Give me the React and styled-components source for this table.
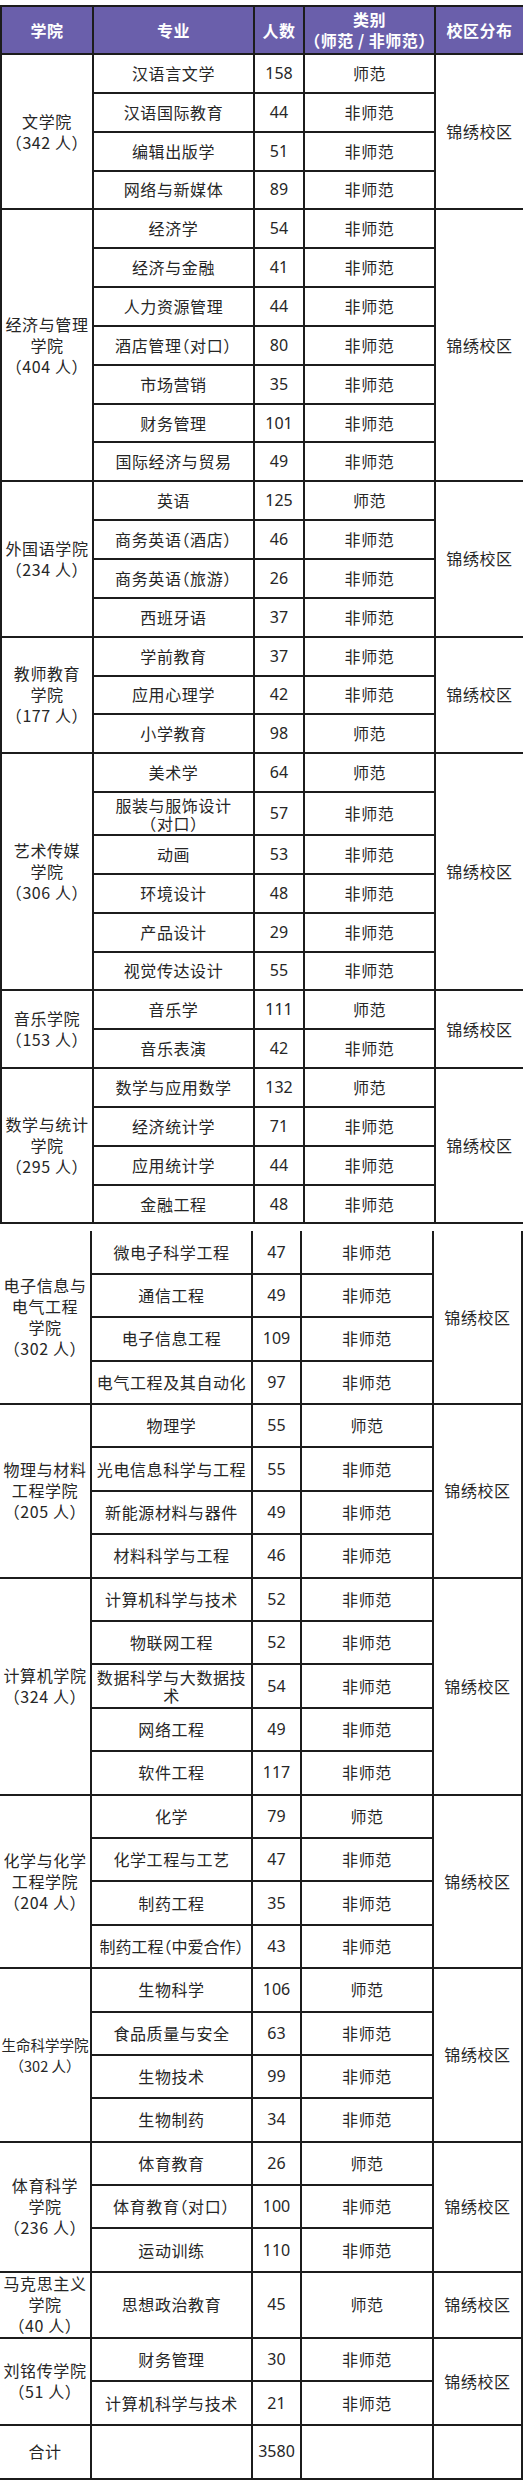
import React from "react";
import styled, { createGlobalStyle } from "styled-components";

const Global = createGlobalStyle`
  html, body { margin: 0; padding: 0; background: #fff; }
  body {
    font-family: "Noto Sans CJK SC", "Noto Sans", sans-serif;
    color: #262626;
    overflow-x: hidden;
  }
`;

const Page = styled.div`
  width: 523px;
  display: flex;
  flex-direction: column;
  padding-top: 5px;
  gap: 7px;
`;

const Grid = styled.div`
  display: grid;
  background: #1c1c1c;
  gap: 2px;
  grid-template-columns: ${(p) => p.$cols};
  grid-template-rows: ${(p) => p.$rows};
  padding: ${(p) => p.$pad};
`;

const Cell = styled.div`
  grid-column: ${(p) => p.$col};
  grid-row: span ${(p) => p.$span || 1};
  background: #fff;
  display: flex;
  align-items: center;
  justify-content: center;
  text-align: center;
  font-size: 16px;
  line-height: ${(p) => p.$lh || "21px"};
  letter-spacing: ${(p) => (p.$tight ? "0" : "0.6px")};
  font-feature-settings: "halt";
  white-space: pre-line;
  padding: 0 1px;
`;

const CollegeCell = styled(Cell)`
  font-size: ${(p) => p.$size || "16px"};
  letter-spacing: ${(p) => (p.$size ? "0" : "0.6px")};
`;

const HeadCell = styled(Cell)`
  background: #6a5fab;
  color: #fff;
  font-weight: 700;
  font-size: 16px;
  letter-spacing: 0.5px;
`;

const NumCell = styled(Cell)`
  font-family: "Noto Sans", "Noto Sans CJK SC", sans-serif;
  letter-spacing: 0;
`;

const A = "师范";
const B = "非师范";

const topData = [
  {
    college: "文学院\n（342 人）",
    majors: [
      ["汉语言文学", 158, A],
      ["汉语国际教育", 44, B],
      ["编辑出版学", 51, B],
      ["网络与新媒体", 89, B],
    ],
  },
  {
    college: "经济与管理\n学院\n（404 人）",
    majors: [
      ["经济学", 54, B],
      ["经济与金融", 41, B],
      ["人力资源管理", 44, B],
      ["酒店管理（对口）", 80, B],
      ["市场营销", 35, B],
      ["财务管理", 101, B],
      ["国际经济与贸易", 49, B],
    ],
  },
  {
    college: "外国语学院\n（234 人）",
    majors: [
      ["英语", 125, A],
      ["商务英语（酒店）", 46, B],
      ["商务英语（旅游）", 26, B],
      ["西班牙语", 37, B],
    ],
  },
  {
    college: "教师教育\n学院\n（177 人）",
    majors: [
      ["学前教育", 37, B],
      ["应用心理学", 42, B],
      ["小学教育", 98, A],
    ],
  },
  {
    college: "艺术传媒\n学院\n（306 人）",
    majors: [
      ["美术学", 64, A],
      ["服装与服饰设计\n（对口）", 57, B, "41px"],
      ["动画", 53, B],
      ["环境设计", 48, B],
      ["产品设计", 29, B],
      ["视觉传达设计", 55, B],
    ],
  },
  {
    college: "音乐学院\n（153 人）",
    majors: [
      ["音乐学", 111, A],
      ["音乐表演", 42, B],
    ],
  },
  {
    college: "数学与统计\n学院\n（295 人）",
    majors: [
      ["数学与应用数学", 132, A],
      ["经济统计学", 71, B],
      ["应用统计学", 44, B],
      ["金融工程", 48, B],
    ],
  },
];

const R2 = "41.4px";
const bottomData = [
  {
    college: "电子信息与\n电气工程\n学院\n（302 人）",
    majors: [
      ["微电子科学工程", 47, B],
      ["通信工程", 49, B],
      ["电子信息工程", 109, B],
      ["电气工程及其自动化", 97, B],
    ],
  },
  {
    college: "物理与材料\n工程学院\n（205 人）",
    majors: [
      ["物理学", 55, A],
      ["光电信息科学与工程", 55, B],
      ["新能源材料与器件", 49, B],
      ["材料科学与工程", 46, B],
    ],
  },
  {
    college: "计算机学院\n（324 人）",
    majors: [
      ["计算机科学与技术", 52, B],
      ["物联网工程", 52, B],
      ["数据科学与大数据技\n术", 54, B],
      ["网络工程", 49, B],
      ["软件工程", 117, B],
    ],
  },
  {
    college: "化学与化学\n工程学院\n（204 人）",
    majors: [
      ["化学", 79, A],
      ["化学工程与工艺", 47, B],
      ["制药工程", 35, B],
      ["制药工程（中爱合作）", 43, B, null, true],
    ],
  },
  {
    college: "生命科学学院\n（302 人）",
    size: "14.5px",
    majors: [
      ["生物科学", 106, A],
      ["食品质量与安全", 63, B],
      ["生物技术", 99, B],
      ["生物制药", 34, B],
    ],
  },
  {
    college: "体育科学\n学院\n（236 人）",
    majors: [
      ["体育教育", 26, A],
      ["体育教育（对口）", 100, B],
      ["运动训练", 110, B],
    ],
  },
  {
    college: "马克思主义\n学院\n（40 人）",
    majors: [["思想政治教育", 45, A, "64px"]],
  },
  {
    college: "刘铭传学院\n（51 人）",
    majors: [
      ["财务管理", 30, B, "41.5px"],
      ["计算机科学与技术", 21, B, "41.5px"],
    ],
  },
];

function rowsOf(data, def) {
  return data.flatMap((g) => g.majors.map((m) => m[3] || def));
}

function Group({ g }) {
  const n = g.majors.length;
  return g.majors.map((m, i) => (
    <React.Fragment key={m[0] + i}>
      {i === 0 && (
        <CollegeCell $col={1} $span={n} $size={g.size}>
          {g.college}
        </CollegeCell>
      )}
      <Cell
        $col={2}
        $tight={m[4]}
        $lh={m[0].includes("\n") ? "18px" : undefined}
      >
        {m[0]}
      </Cell>
      <NumCell $col={3}>{m[1]}</NumCell>
      <Cell $col={4}>{m[2]}</Cell>
      {i === 0 && (
        <Cell $col={5} $span={n}>
          锦绣校区
        </Cell>
      )}
    </React.Fragment>
  ));
}

export default function App() {
  const topRows = ["46px", ...rowsOf(topData, "36.85px")].join(" ");
  const bottomRows = [...rowsOf(bottomData, R2), "52px"].join(" ");
  return (
    <>
      <Global />
      <Page>
        <Grid
          $cols="90px 159px 48px 129px 1fr"
          $rows={topRows}
          $pad="2px 0 2px 2px"
        >
          <HeadCell $col={1}>学院</HeadCell>
          <HeadCell $col={2}>专业</HeadCell>
          <HeadCell $col={3}>人数</HeadCell>
          <HeadCell $col={4}>{"类别\n（师范 / 非师范）"}</HeadCell>
          <HeadCell $col={5}>校区分布</HeadCell>
          {topData.map((g) => (
            <Group key={g.college} g={g} />
          ))}
        </Grid>
        <Grid
          $cols="90px 159px 47px 130px 87px"
          $rows={bottomRows}
          $pad="0 2px 2px 0"
        >
          {bottomData.map((g) => (
            <Group key={g.college} g={g} />
          ))}
          <Cell $col={1}>合计</Cell>
          <Cell $col={2} />
          <NumCell $col={3}>3580</NumCell>
          <Cell $col={4} />
          <Cell $col={5} />
        </Grid>
      </Page>
    </>
  );
}
